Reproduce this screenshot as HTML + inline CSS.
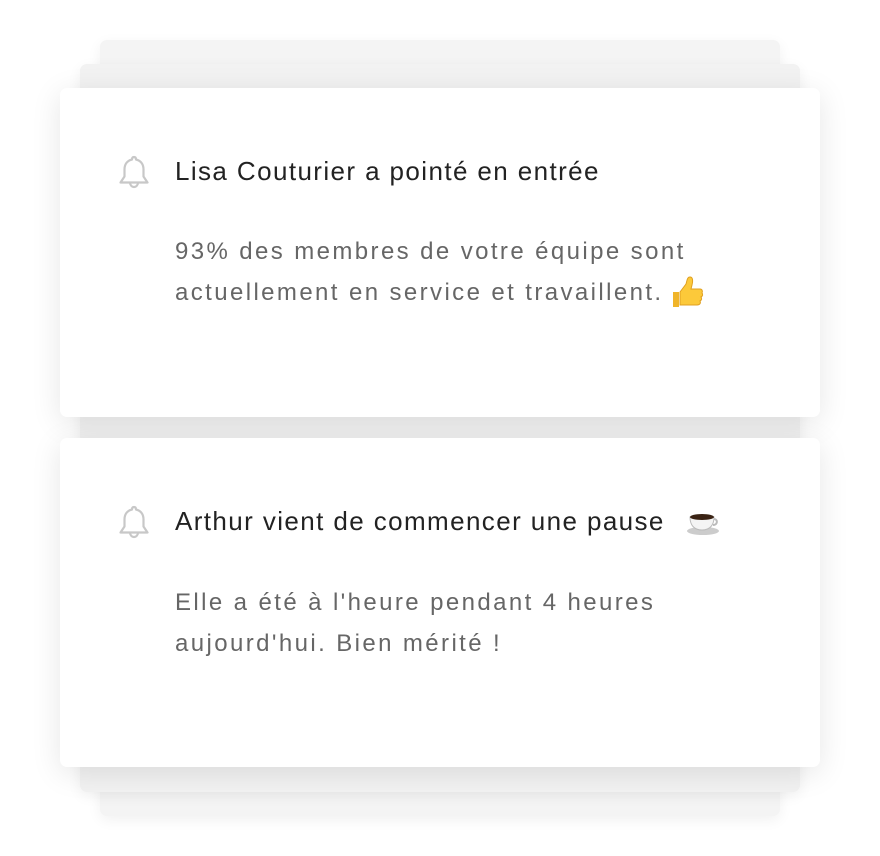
<!DOCTYPE html>
<html><head><meta charset="utf-8"><style>
body{margin:0;width:880px;height:856px;background:#fff;position:relative;overflow:hidden;font-family:"Liberation Sans",sans-serif}
.c{position:absolute;border-radius:7px}
.back{background:#f4f4f4;box-shadow:0 4px 14px rgba(0,0,0,.06)}
.main{background:#fff;box-shadow:0 6px 30px rgba(0,0,0,.10)}
.t{position:absolute;left:175px;font-size:26px;color:#222;letter-spacing:1.4px;white-space:nowrap}
.b{position:absolute;left:175px;font-size:24px;color:#666;line-height:41px;letter-spacing:2.4px;white-space:nowrap}
.bell{position:absolute;left:116px}
svg.i{vertical-align:middle}
</style></head><body>
<div class="c back" style="left:100px;top:40px;width:680px;height:776px"></div>
<div class="c back" style="left:80px;top:64px;width:720px;height:728px;background:#f2f2f2"></div>
<div class="c main" style="left:60px;top:88px;width:760px;height:329px"></div>
<div class="c main" style="left:60px;top:438px;width:760px;height:329px"></div>

<svg class="bell" style="top:154px" width="36" height="38" viewBox="0 0 36 38"><path d="M18 3c1.5 0 2 1 2 2.5 5 1.2 7.5 5 7.5 10v7l4 6H4.5l4-6v-7c0-5 2.5-8.8 7.5-10C16 4 16.5 3 18 3z M14 28.5c0 2.5 1.8 4.5 4 4.5s4-2 4-4.5" fill="none" stroke="#c8c8c8" stroke-width="2.2" stroke-linejoin="round"/></svg>
<div class="t" style="top:156px">Lisa Couturier a pointé en entrée</div>
<div class="b" style="top:231px">93% des membres de votre équipe sont<br>actuellement en service et travaillent.</div>
<svg style="position:absolute;left:670px;top:276px" width="34" height="34" viewBox="0 0 34 34"><path d="M3 16h6v15H3z" fill="#f0b429"/><path d="M10 16l6-8c1-3 1-7 4-7 3 0 3 4 2 8l-1 4h9c2 0 3 2 2 4 1 1 1 3-1 4 1 1 1 3-1 4 1 2 0 4-3 4H10z" fill="#fcc93a" stroke="#e0a020" stroke-width="1"/></svg>

<svg class="bell" style="top:504px" width="36" height="38" viewBox="0 0 36 38"><path d="M18 3c1.5 0 2 1 2 2.5 5 1.2 7.5 5 7.5 10v7l4 6H4.5l4-6v-7c0-5 2.5-8.8 7.5-10C16 4 16.5 3 18 3z M14 28.5c0 2.5 1.8 4.5 4 4.5s4-2 4-4.5" fill="none" stroke="#c8c8c8" stroke-width="2.2" stroke-linejoin="round"/></svg>
<div class="t" style="top:506px">Arthur vient de commencer une pause</div>
<svg style="position:absolute;left:686px;top:505px" width="36" height="32" viewBox="0 0 36 32"><ellipse cx="17" cy="26" rx="16" ry="4" fill="#ccc"/><path d="M4 12h24c0 8-4 13-12 13S4 20 4 12z" fill="#f4f4f4" stroke="#bbb"/><ellipse cx="16" cy="12" rx="12" ry="3" fill="#3a2314"/><path d="M28 14c4 0 4 6-1 6" fill="none" stroke="#bbb" stroke-width="2"/></svg>
<div class="b" style="top:582px">Elle a été à l'heure pendant 4 heures<br>aujourd'hui. Bien mérité !</div>
</body></html>
